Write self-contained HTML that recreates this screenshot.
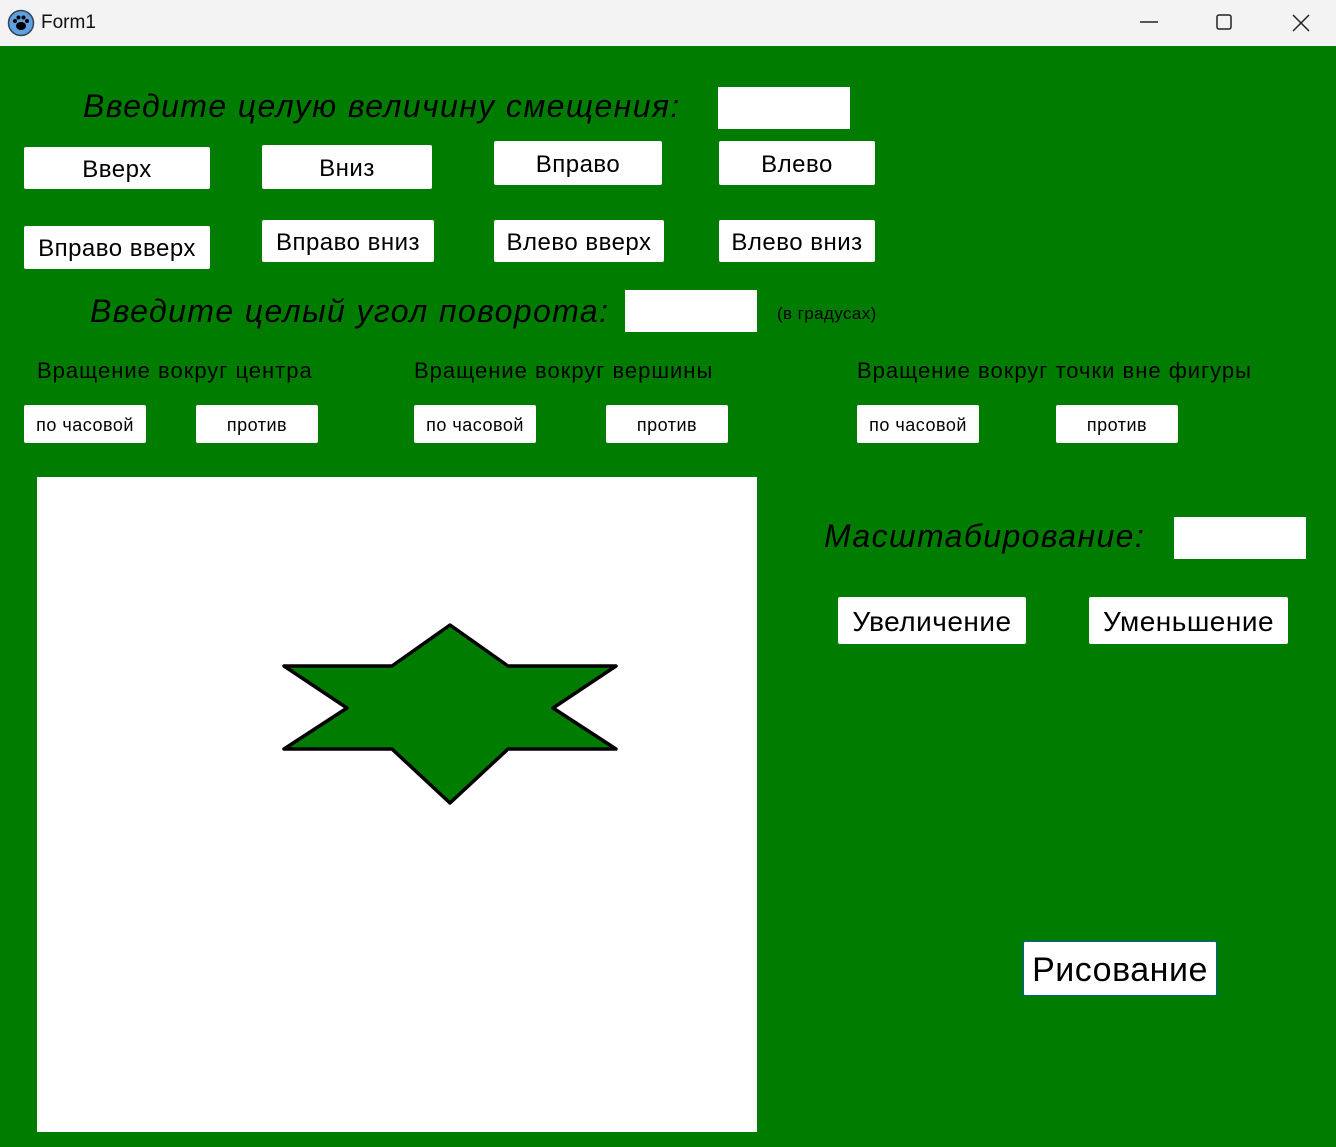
<!DOCTYPE html>
<html><head><meta charset="utf-8"><style>
*{margin:0;padding:0;box-sizing:border-box}
body{width:1336px;height:1147px;background:#007c00;position:relative;overflow:hidden;font-family:"Liberation Sans","DejaVu Sans",sans-serif}
#tb{position:absolute;left:0;top:0;width:1336px;height:46px;background:#f3f3f3}
.a{position:absolute;white-space:nowrap;color:#000}
.b{position:absolute;background:#fff;border-radius:2px;display:flex;align-items:center;justify-content:center;color:#000;white-space:nowrap;padding-top:3px;letter-spacing:.5px}
.i{position:absolute;background:#fff}
.t{font-style:italic;font-size:32px;letter-spacing:1.4px}
</style></head><body>
<div id="tb">
<svg style="position:absolute;left:7px;top:9px" width="28" height="28" viewBox="0 0 28 28"><circle cx="14" cy="14" r="12.5" fill="#5ea0e0" stroke="#345" stroke-width="1.5"/><ellipse cx="14" cy="17" rx="5" ry="4" fill="#000"/><circle cx="8" cy="12" r="2" fill="#000"/><circle cx="11.5" cy="8.5" r="2" fill="#000"/><circle cx="16.5" cy="8.5" r="2" fill="#000"/><circle cx="20" cy="12" r="2" fill="#000"/></svg>
<div class="a" style="left:41px;top:12px;font-size:19px;color:#111">Form1</div>
<svg style="position:absolute;left:1140px;top:12px" width="180" height="22"><line x1="0" y1="10" x2="18" y2="10" stroke="#222" stroke-width="1.5"/><rect x="77" y="3" width="14" height="14" rx="2" fill="none" stroke="#222" stroke-width="1.5"/><line x1="153" y1="3" x2="169" y2="19" stroke="#222" stroke-width="1.5"/><line x1="169" y1="3" x2="153" y2="19" stroke="#222" stroke-width="1.5"/></svg>
</div>
<div class="a t" style="left:83px;top:88px">Введите целую величину смещения:</div>
<div class="i" style="left:718px;top:87px;width:132px;height:42px"></div>
<div class="b" style="left:24px;top:147px;width:186px;height:42px;font-size:24px">Вверх</div>
<div class="b" style="left:262px;top:145px;width:170px;height:44px;font-size:24px">Вниз</div>
<div class="b" style="left:494px;top:141px;width:168px;height:44px;font-size:24px">Вправо</div>
<div class="b" style="left:719px;top:141px;width:156px;height:44px;font-size:24px">Влево</div>
<div class="b" style="left:24px;top:226px;width:186px;height:43px;font-size:24px">Вправо вверх</div>
<div class="b" style="left:262px;top:220px;width:172px;height:42px;font-size:24px">Вправо вниз</div>
<div class="b" style="left:494px;top:220px;width:170px;height:42px;font-size:24px">Влево вверх</div>
<div class="b" style="left:719px;top:220px;width:156px;height:42px;font-size:24px">Влево вниз</div>
<div class="a t" style="left:90px;top:293px">Введите целый угол поворота:</div>
<div class="i" style="left:625px;top:290px;width:132px;height:42px"></div>
<div class="a" style="left:777px;top:304px;font-size:17px;letter-spacing:.4px">(в градусах)</div>
<div class="a" style="left:37px;top:358px;font-size:22px;letter-spacing:1px">Вращение вокруг центра</div>
<div class="a" style="left:414px;top:358px;font-size:22px;letter-spacing:1px">Вращение вокруг вершины</div>
<div class="a" style="left:857px;top:358px;font-size:22px;letter-spacing:1px">Вращение вокруг точки вне фигуры</div>
<div class="b" style="left:24px;top:405px;width:122px;height:38px;font-size:18px">по часовой</div>
<div class="b" style="left:196px;top:405px;width:122px;height:38px;font-size:18px">против</div>
<div class="b" style="left:414px;top:405px;width:122px;height:38px;font-size:18px">по часовой</div>
<div class="b" style="left:606px;top:405px;width:122px;height:38px;font-size:18px">против</div>
<div class="b" style="left:857px;top:405px;width:122px;height:38px;font-size:18px">по часовой</div>
<div class="b" style="left:1056px;top:405px;width:122px;height:38px;font-size:18px">против</div>
<div class="i" style="left:37px;top:477px;width:720px;height:655px"></div>
<svg style="position:absolute;left:0;top:0" width="1336" height="1147"><polygon points="450,625 392,666 284,666 347,708 284,749 392,749 450,803 508,749 616,749 553,708 616,666 508,666" fill="#007c00" stroke="#000" stroke-width="3.5" stroke-linejoin="round"/></svg>
<div class="a t" style="left:824px;top:518px">Масштабирование:</div>
<div class="i" style="left:1174px;top:517px;width:132px;height:42px"></div>
<div class="b" style="left:838px;top:597px;width:188px;height:47px;font-size:28px">Увеличение</div>
<div class="b" style="left:1089px;top:597px;width:199px;height:47px;font-size:28px">Уменьшение</div>
<div class="b" style="left:1023px;top:941px;width:194px;height:55px;font-size:34px;border:1px solid #0a5aa8">Рисование</div>
</body></html>
